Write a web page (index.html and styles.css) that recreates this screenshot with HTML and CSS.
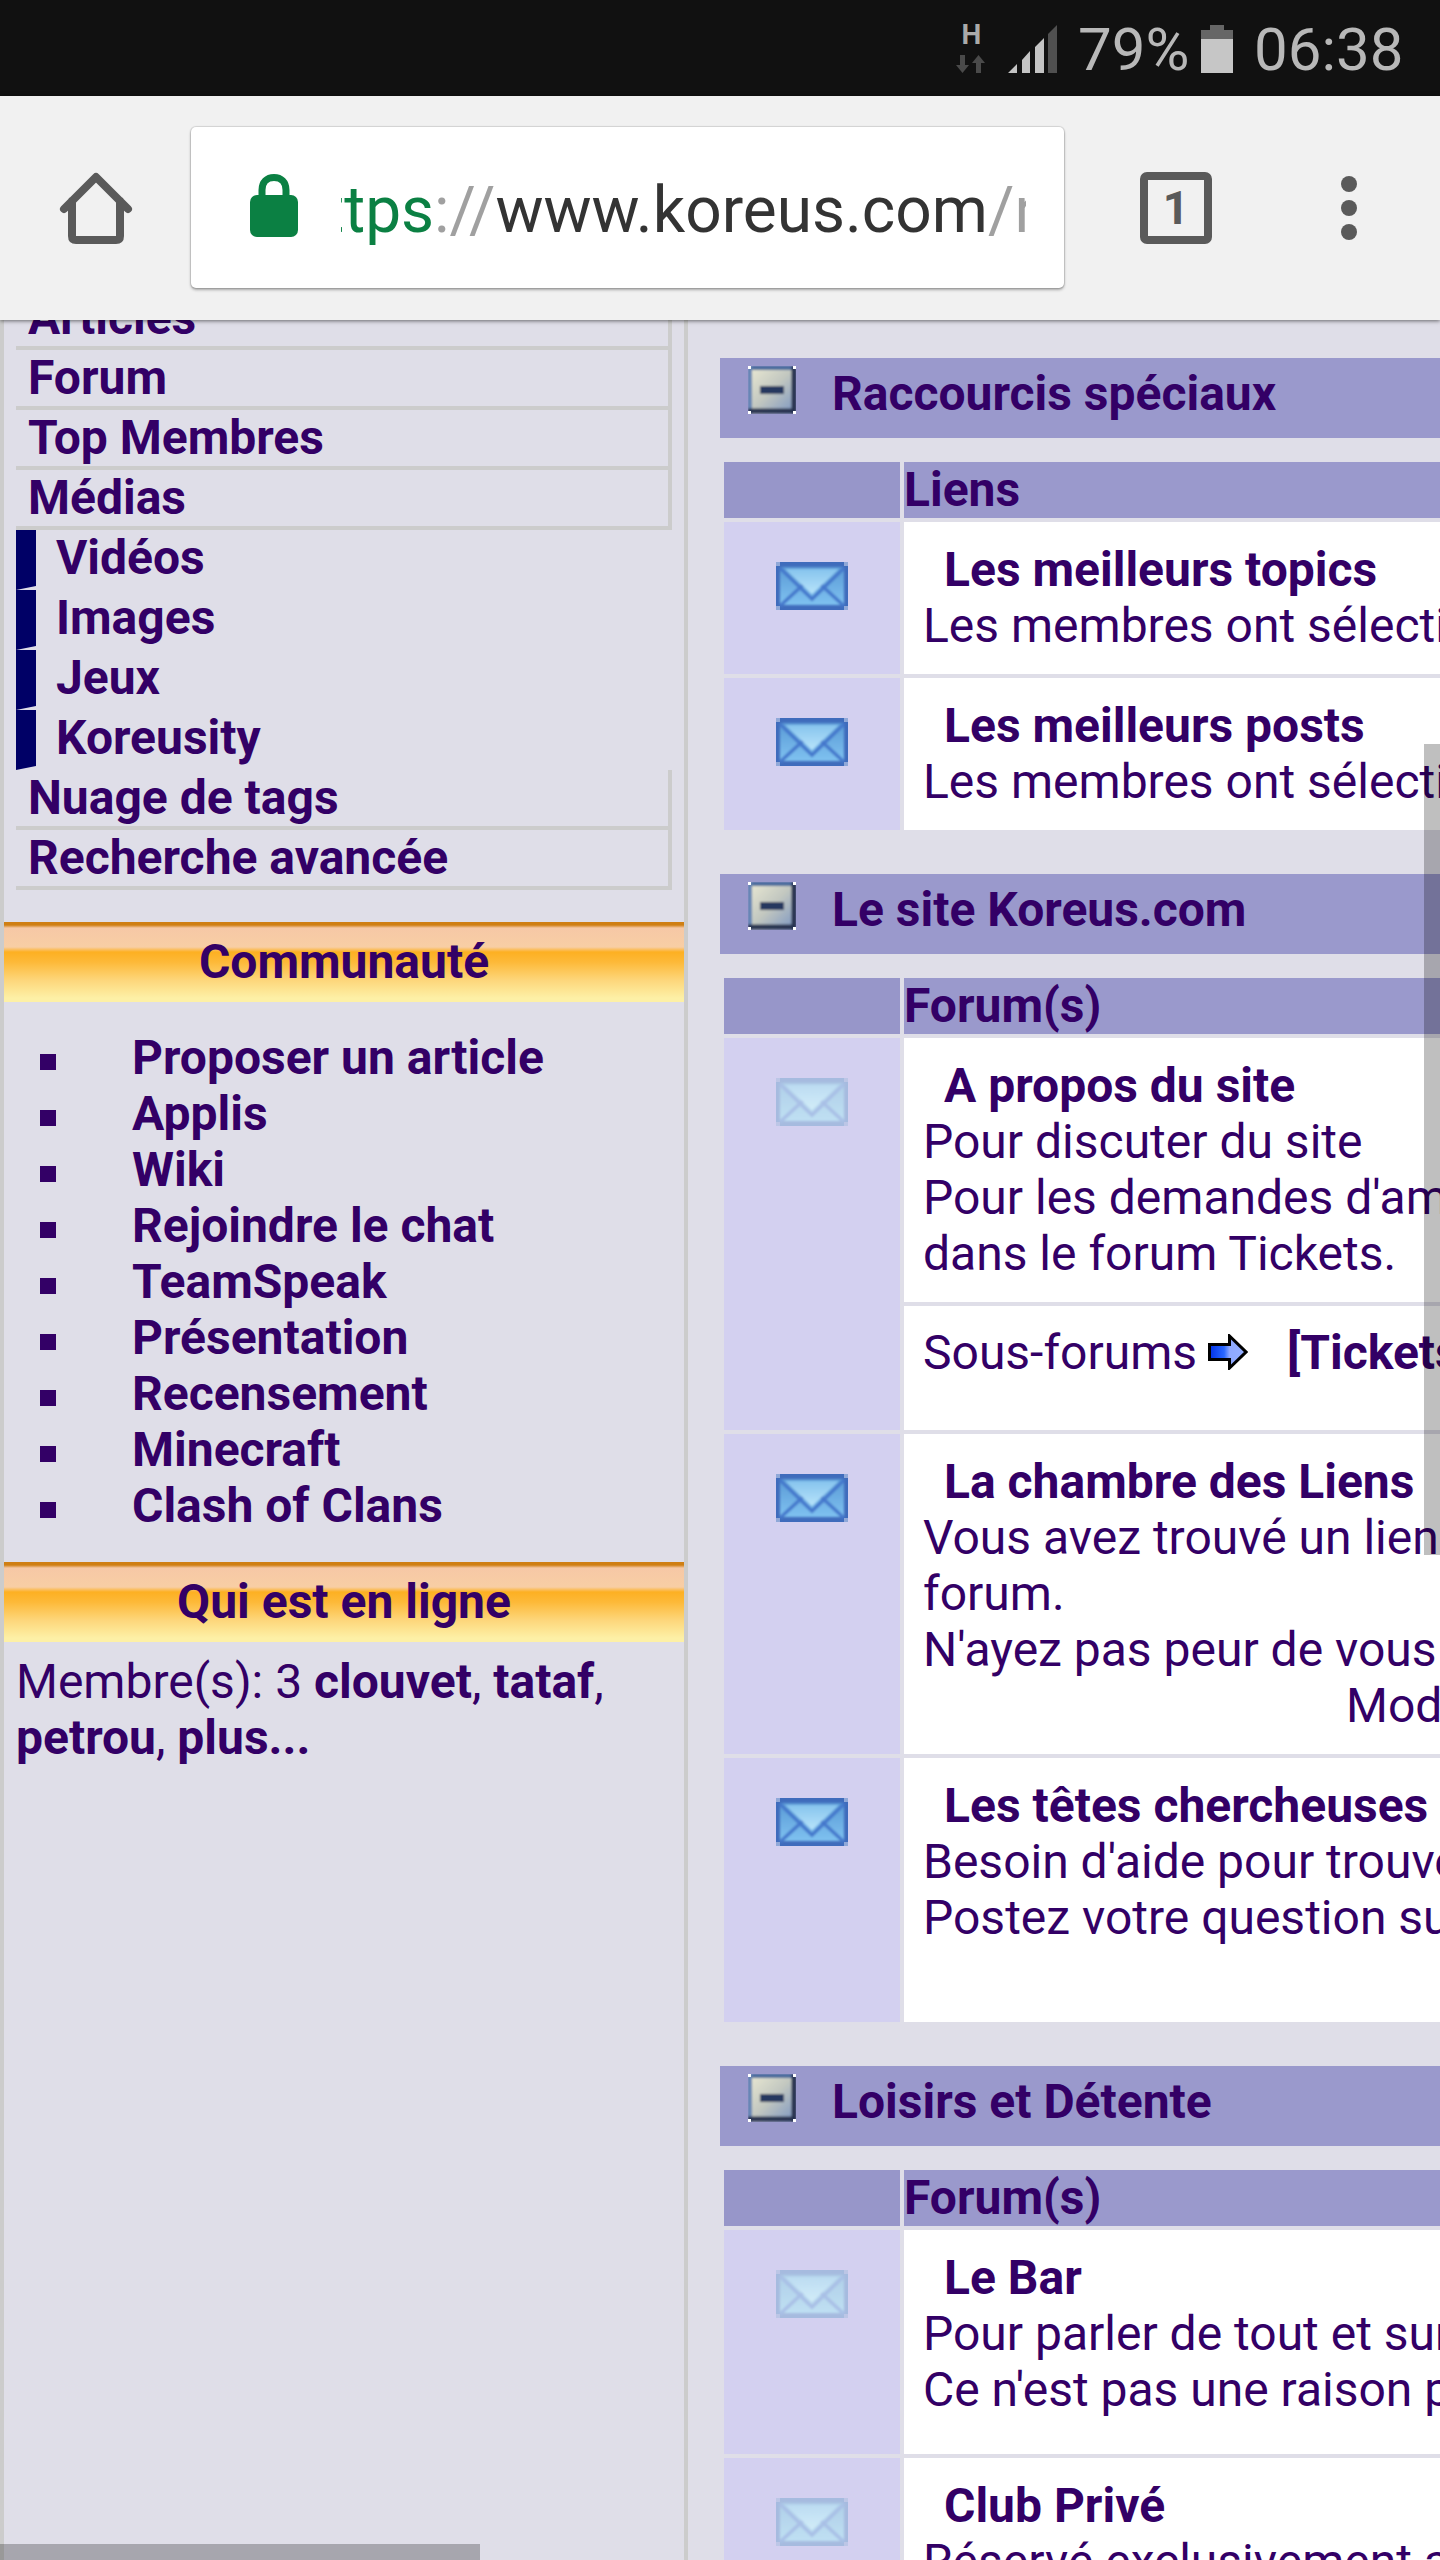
FILE: index.html
```html
<!DOCTYPE html>
<html lang="fr">
<head>
<meta charset="utf-8">
<title>Koreus.com</title>
<link rel="stylesheet" href="styles.css">
</head>
<body>
<svg class="defs" width="0" height="0" aria-hidden="true">
  <defs>
    <filter id="soft" x="-10%" y="-10%" width="120%" height="120%"><feGaussianBlur stdDeviation="0.9"/></filter>
    <linearGradient id="envFlap" x1="0" y1="0" x2="0" y2="1"><stop offset="0" stop-color="#86c4ee"/><stop offset="1" stop-color="#b8e4fa"/></linearGradient>
    <linearGradient id="envBody" x1="0" y1="0" x2="0" y2="1"><stop offset="0" stop-color="#5a9ad6"/><stop offset="1" stop-color="#7fc2f0"/></linearGradient>
    <linearGradient id="envFlapRead" x1="0" y1="0" x2="0" y2="1"><stop offset="0" stop-color="#bcdcf2"/><stop offset="1" stop-color="#d2ecf8"/></linearGradient>
    <linearGradient id="envBodyRead" x1="0" y1="0" x2="0" y2="1"><stop offset="0" stop-color="#b0cfe8"/><stop offset="1" stop-color="#bfe0f3"/></linearGradient>
    <linearGradient id="minusFill" x1="0" y1="0" x2="1" y2="1"><stop offset="0" stop-color="#ecebd4"/><stop offset=".5" stop-color="#c2c7c0"/><stop offset="1" stop-color="#7893c2"/></linearGradient>
    <linearGradient id="arrowFill" x1="0" y1="0" x2="1" y2="0"><stop offset="0" stop-color="#0030e8"/><stop offset=".4" stop-color="#2a68ff"/><stop offset=".55" stop-color="#8ea8ff"/><stop offset="1" stop-color="#96b0ff"/></linearGradient>
    <symbol id="envelope" viewBox="0 0 72 48">
      <rect width="72" height="48" fill="#3f6cbc"/>
      <g filter="url(#soft)">
        <rect x="4" y="5" width="64" height="38" fill="url(#envBody)"/>
        <path d="M4 44 L29 21 M68 44 L43 21 M4 6 L36 37 L68 6" fill="none" stroke="#4478cc" stroke-width="3.500"/>
        <path d="M9 7 H63 L36 32 Z" fill="url(#envFlap)"/>
      </g>
      <path d="M0 0h4v4H0zM68 0h4v4h-4zM0 44h4v4H0zM68 44h4v4h-4z" fill="#8fa8d8"/>
    </symbol>
    <symbol id="envelope-read" viewBox="0 0 72 48">
      <rect width="72" height="48" fill="#a6bbdf"/>
      <g filter="url(#soft)">
        <rect x="4" y="5" width="64" height="38" fill="url(#envBodyRead)"/>
        <path d="M4 44 L29 21 M68 44 L43 21 M4 6 L36 37 L68 6" fill="none" stroke="#a9c0e6" stroke-width="3.500"/>
        <path d="M9 7 H63 L36 32 Z" fill="url(#envFlapRead)"/>
      </g>
      <path d="M0 0h4v4H0zM68 0h4v4h-4zM0 44h4v4H0zM68 44h4v4h-4z" fill="#bcc6e6"/>
    </symbol>
    <symbol id="minus" viewBox="0 0 48 48">
      <g filter="url(#soft)">
        <rect width="48" height="48" fill="url(#minusFill)"/>
        <path d="M0 2H48" stroke="#466a9c" stroke-width="4"/>
        <path d="M2 0V48" stroke="#6484b4" stroke-width="4"/>
        <path d="M46 0V48M0 45H48" stroke="#26324f" stroke-width="5"/>
        <rect x="12" y="20" width="24" height="8" fill="#25375e"/>
      </g>
      <path d="M0 0h3v3H0zM45 0h3v3h-3zM0 45h3v3H0zM45 45h3v3h-3z" fill="#fff"/>
    </symbol>
  </defs>
</svg>

<header class="status">
  <div class="net">
    <span class="net-h">H</span>
    <svg class="net-arrows" width="32" height="18" viewBox="0 0 32 18"><path d="M5 0h5v10h4L7.500 18 1 10h4zM21 8h5v10h-5zM23.500 0 30 8H17z" fill="#4a4a4a"/></svg>
  </div>
  <svg class="signal" width="49" height="48" viewBox="0 0 49 48"><path d="M0 48 9 39V48zM14 35 22 26V48H14zM27 22 36 13V48H27z" fill="#c4c4c4"/><path d="M40 9 49 0V48H40z" fill="#505050"/></svg>
  <span class="status-text pct">79%</span>
  <svg class="battery" width="32" height="48" viewBox="0 0 32 48"><path d="M9 0h14v5h9v9H0V5h9z" fill="#666"/><rect y="14" width="32" height="34" fill="#c6c6c6"/></svg>
  <span class="status-text clock">06:38</span>
</header>

<nav class="toolbar">
  <svg class="home" width="80" height="80" viewBox="0 0 80 80"><path d="M8 41 40 9 72 41M16 33V68Q16 72 20 72H60Q64 72 64 68V33" fill="none" stroke="#5a5a5a" stroke-width="8" stroke-linecap="round" stroke-linejoin="round"/></svg>
  <div class="urlbox">
    <svg class="lock" width="48" height="64" viewBox="0 0 48 64"><path d="M12 24V16C12 8 17 3.500 24 3.500S36 8 36 16V24" fill="none" stroke="#0b8043" stroke-width="7"/><rect y="21" width="48" height="42" rx="7" fill="#0b8043"/></svg>
    <div class="url"><div class="url-inner"><span class="u-green">https</span><span class="u-gray">://</span><span class="u-dark">www.koreus.com</span><span class="u-gray">/r</span></div></div>
  </div>
  <div class="tabs">1</div>
  <div class="menu"><i></i><i></i><i></i></div>
</nav>

<div class="page">
  <aside class="side">
    <ul class="menu-list">
      <li class="nav">Articles</li>
      <li class="nav">Forum</li>
      <li class="nav">Top Membres</li>
      <li class="nav">Médias</li>
      <li class="sub">Vidéos</li>
      <li class="sub">Images</li>
      <li class="sub">Jeux</li>
      <li class="sub">Koreusity</li>
      <li class="nav">Nuage de tags</li>
      <li class="nav">Recherche avancée</li>
    </ul>
    <h3 class="block-title">Communauté</h3>
    <ul class="bullets">
      <li>Proposer un article</li>
      <li>Applis</li>
      <li>Wiki</li>
      <li>Rejoindre le chat</li>
      <li>TeamSpeak</li>
      <li>Présentation</li>
      <li>Recensement</li>
      <li>Minecraft</li>
      <li>Clash of Clans</li>
    </ul>
    <h3 class="block-title online-title">Qui est en ligne</h3>
    <p class="online">Membre(s): 3 <b>clouvet</b>, <b>tataf</b>, <b>petrou</b>, <b>plus...</b></p>
  </aside>

  <main class="main">
    <section class="cat">
      <h2 class="cat-head"><svg class="minus" width="48" height="48"><use href="#minus"/></svg><span>Raccourcis spéciaux</span></h2>
      <div class="grid">
        <div class="th"></div><div class="th th-text">Liens</div>
        <div class="ico"><svg class="env" width="72" height="48"><use href="#envelope"/></svg></div>
        <div class="cell"><div class="ft">Les meilleurs topics</div><div>Les membres ont sélectionné les meilleurs topics</div></div>
        <div class="ico"><svg class="env" width="72" height="48"><use href="#envelope"/></svg></div>
        <div class="cell"><div class="ft">Les meilleurs posts</div><div>Les membres ont sélectionné les meilleurs posts</div></div>
      </div>
    </section>

    <section class="cat">
      <h2 class="cat-head"><svg class="minus" width="48" height="48"><use href="#minus"/></svg><span>Le site Koreus.com</span></h2>
      <div class="grid">
        <div class="th"></div><div class="th th-text">Forum(s)</div>
        <div class="ico"><svg class="env" width="72" height="48"><use href="#envelope-read"/></svg></div>
        <div class="stack">
          <div class="cell"><div class="ft">A propos du site</div><div>Pour discuter du site</div><div>Pour les demandes d'améliorations, rendez-vous</div><div>dans le forum Tickets.</div></div>
          <div class="cell subforums">Sous-forums<svg class="arrow" width="40" height="36" viewBox="0 0 40 36"><path d="M1.500 10.500H21.500V2L38 18 21.500 34V25.500H1.500Z" fill="url(#arrowFill)" stroke="#000" stroke-width="3"/></svg><b class="tickets">[Tickets]</b></div>
        </div>
        <div class="ico"><svg class="env" width="72" height="48"><use href="#envelope"/></svg></div>
        <div class="cell"><div class="ft">La chambre des Liens</div><div>Vous avez trouvé un lien intéressant ? Partagez-le sur ce</div><div>forum.</div><div>N'ayez pas peur de vous lâcher</div><div class="mods">Modérateur</div></div>
        <div class="ico"><svg class="env" width="72" height="48"><use href="#envelope"/></svg></div>
        <div class="cell cell-tall"><div class="ft">Les têtes chercheuses</div><div>Besoin d'aide pour trouver quelque chose ?</div><div>Postez votre question sur ce forum</div></div>
      </div>
    </section>

    <section class="cat">
      <h2 class="cat-head"><svg class="minus" width="48" height="48"><use href="#minus"/></svg><span>Loisirs et Détente</span></h2>
      <div class="grid">
        <div class="th"></div><div class="th th-text">Forum(s)</div>
        <div class="ico"><svg class="env" width="72" height="48"><use href="#envelope-read"/></svg></div>
        <div class="cell cell-mid"><div class="ft">Le Bar</div><div>Pour parler de tout et surtout de rien</div><div>Ce n'est pas une raison pour faire n'importe quoi</div></div>
        <div class="ico"><svg class="env" width="72" height="48"><use href="#envelope-read"/></svg></div>
        <div class="cell"><div class="ft">Club Privé</div><div>Réservé exclusivement aux membres</div></div>
      </div>
    </section>
  </main>

  <div class="vscroll"></div>
  <div class="hscroll"></div>
</div>
</body>
</html>
```

FILE: styles.css
```css
* { box-sizing: border-box; }
html, body { margin: 0; padding: 0; }
body {
  width: 1440px;
  height: 2560px;
  overflow: hidden;
  background: #dfdee8;
  color: #330066;
  font-family: Roboto, "Liberation Sans", sans-serif;
  font-size: 48px;
  line-height: 56px;
  display: flex;
  flex-direction: column;
}
.defs { position: absolute; }

/* status bar */
.status {
  height: 96px;
  flex: none;
  background: #111;
  display: flex;
  align-items: flex-start;
  padding-left: 955px;
  position: relative;
  z-index: 3;
}
.net { width: 32px; height: 60px; margin-top: 20px; display: flex; flex-direction: column; align-items: center; }
.net-h { font: 700 28px/30px Roboto, sans-serif; color: #aaa; height: 35px; padding-left: 1px; }
.signal { margin: 25px 0 0 21px; }
.status-text {
  font-family: Roboto, sans-serif;
  font-weight: 400;
  font-size: 60px;
  line-height: 72px;
  color: #b8b8b8;
  margin-top: 14px;
}
.pct { margin-left: 21px; width: 109px; white-space: nowrap; }
.battery { margin: 25px 0 0 14px; }
.clock { margin-left: 21px; }

/* browser toolbar */
.toolbar {
  height: 224px;
  flex: none;
  background: #f1f1f1;
  position: relative;
  z-index: 3;
  box-shadow: 0 1px 4px rgba(0, 0, 0, .55);
  display: flex;
  align-items: flex-start;
  padding-left: 56px;
}
.home { margin-top: 72px; }
.urlbox {
  width: 873px;
  height: 161px;
  margin: 31px 0 0 55px;
  background: #fff;
  border-radius: 5px;
  box-shadow: 0 0 1px 1px rgba(0, 0, 0, .12), 0 2px 3px rgba(0, 0, 0, .3);
  display: flex;
  align-items: flex-start;
  padding-left: 59px;
}
.lock { margin-top: 47px; flex: none; }
.url { width: 685px; height: 100px; margin: 34px 0 0 43px; overflow: hidden; }
.url-inner {
  font-size: 64px;
  line-height: 100px;
  white-space: nowrap;
  margin-left: -53px;
}
.u-green { color: #0b8043; }
.u-gray { color: #a0a0a0; }
.u-dark { color: #333; }
.tabs {
  width: 72px;
  height: 72px;
  margin: 76px 0 0 76px;
  border: 8px solid #5a5a5a;
  border-radius: 7px;
  color: #5a5a5a;
  font-weight: 700;
  font-size: 46px;
  line-height: 56px;
  text-align: center;
}
.menu { margin: 80px 0 0 129px; display: flex; flex-direction: column; gap: 8px; }
.menu i { display: block; width: 16px; height: 16px; border-radius: 50%; background: #5a5a5a; }

/* page */
.page { flex: 1; min-height: 0; display: flex; overflow: hidden; position: relative; }
.side {
  width: 688px;
  flex: none;
  border-left: 4px solid #ccc;
  border-right: 4px solid #ccc;
  font-weight: 700;
}
.menu-list { list-style: none; margin: -30px 0 0; padding: 0 12px; }
.nav { height: 60px; padding-left: 12px; border-right: 4px solid #ccc; border-bottom: 4px solid #ccc; }
.sub { height: 60px; padding-left: 20px; border-left: 20px solid #006; border-bottom: 4px solid #dfdee8; }
.block-title {
  margin: 32px 0 0;
  height: 80px;
  padding-top: 12px;
  font-size: 48px;
  line-height: 56px;
  font-weight: 700;
  text-align: center;
  background: linear-gradient(#cf7f14 0, #cf7f14 3px, #f6c8a6 6px, #f8cea4 25px, #fdb022 30px, #fdb938 40px, #fdd67a 58px, #fdf0a6 76px, #fdf0a6 80px);
}
.bullets { list-style: none; margin: 28px 0 0; padding: 0 0 0 128px; }
.bullets li { position: relative; }
.bullets li::before {
  content: "";
  position: absolute;
  left: -92px;
  top: 24px;
  width: 16px;
  height: 16px;
  background: #306;
}
.online-title { margin-top: 28px; }
.online { margin: 12px 0 0; padding: 0 12px; font-weight: 400; }
.online b { font-weight: 700; }

/* main */
.main { flex: 1; min-width: 0; padding: 38px 0 0 32px; overflow: hidden; }
.cat { margin-bottom: 44px; }
.cat-head {
  height: 80px;
  margin: 0;
  padding: 8px 0 0 28px;
  background: #9a99cc;
  font-size: 48px;
  line-height: 56px;
  font-weight: 700;
  display: flex;
  align-items: flex-start;
}
.cat-head span { margin: 0 0 0 36px; }
.minus { flex: none; }
.grid {
  margin: 24px 0 0 4px;
  display: grid;
  grid-template-columns: 176px 1fr;
  gap: 4px;
}
.th { height: 56px; background: #9a99cc; }
.th:first-child { background: #9796c9; }
.th-text { font-weight: 700; padding-left: 0; }
.ico { background: #d3d0f0; display: flex; justify-content: center; align-items: flex-start; padding-top: 40px; }
.env { display: block; }
.cell { background: #fff; padding: 20px 0 20px 19px; white-space: nowrap; overflow: hidden; min-width: 0; }
.cell-tall { padding-bottom: 76px; }
.cell-mid { padding-bottom: 36px; }
.ft { font-weight: 700; padding-left: 21px; }
.stack { display: flex; flex-direction: column; gap: 4px; min-width: 0; }
.subforums { height: 124px; padding-top: 19px; display: flex; align-items: flex-start; }
.arrow { flex: none; margin: 9px 0 0 11px; }
.tickets { margin-left: 39px; font-weight: 700; }
.mods { padding-left: 423px; }

/* overlay scrollbars */
.vscroll { position: absolute; right: 0; top: 424px; width: 16px; height: 811px; background: rgba(0, 0, 0, .25); }
.hscroll { position: absolute; left: 0; bottom: 0; width: 480px; height: 16px; background: rgba(0, 0, 0, .25); }
```
